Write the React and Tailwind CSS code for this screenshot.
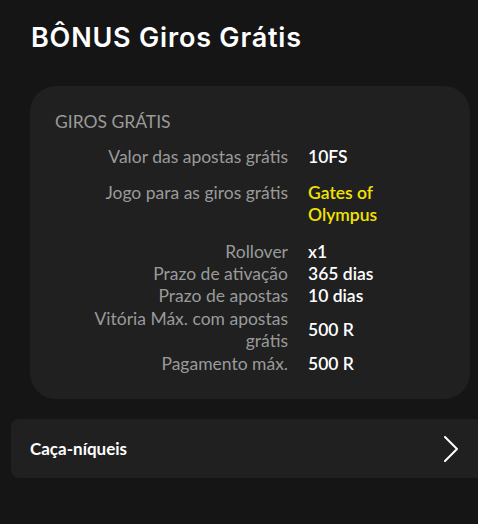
import React from 'react';

const rowsTop = [
    { label: 'Valor das apostas grátis', value: '10FS' },
    { label: 'Jogo para as giros grátis', value: 'Gates of Olympus', highlight: true },
];

const rowsBottom = [
    { label: 'Rollover', value: 'x1' },
    { label: 'Prazo de ativação', value: '365 dias' },
    { label: 'Prazo de apostas', value: '10 dias' },
    { label: 'Vitória Máx. com apostas grátis', value: '500 R' },
    { label: 'Pagamento máx.', value: '500 R' },
];

function InfoRow({ label, value, highlight, align = 'items-start' }) {
    return (
        <div className={`flex ${align} gap-[20px]`}>
            <div className="w-[233px] text-right text-[#9a9a9a]">{label}</div>
            <div className={`w-[120px] font-semibold ${highlight ? 'text-[#f2e300]' : 'text-white'}`}>
                {value}
            </div>
        </div>
    );
}

export default function App() {
    return (
        <div
            className="min-h-[524px] w-full overflow-hidden bg-[#151515]"
            style={{ fontFamily: 'Lato, "Noto Sans", sans-serif' }}
        >
            {/* Title */}
            <h1
                className="pl-[31px] pt-[22px] text-[27px] leading-[32px] font-semibold tracking-[0.8px] text-white"
                style={{ fontFamily: 'Inter, "Noto Sans", sans-serif' }}
            >
                BÔNUS Giros Grátis
            </h1>

            {/* Bonus card */}
            <div className="ml-[30px] mt-[32px] w-[440px] rounded-[26px] bg-[#202020] pl-[25px] pt-[25px] pb-[24px] text-[17.5px] leading-[22.4px]">
                <div className="uppercase text-[#9a9a9a]">Giros Grátis</div>

                <div className="mt-[13px] flex flex-col gap-[13px]">
                    {rowsTop.map((row) => (
                        <InfoRow key={row.label} {...row} />
                    ))}
                </div>

                <div className="mt-[14px] flex flex-col">
                    {rowsBottom.map((row) => (
                        <InfoRow key={row.label} {...row} align="items-center" />
                    ))}
                </div>
            </div>

            {/* Category link */}
            <div className="ml-[11px] mt-[20px] flex h-[59px] w-[480px] items-center rounded-[8px] bg-[#202020] pl-[19px] pr-[33px]">
                <span className="flex-1 text-[17px] font-bold text-white">Caça-níqueis</span>
                <svg width="14" height="26" viewBox="0 0 14 26" fill="none">
                    <polyline points="1,1 13,13 1,25" stroke="white" strokeWidth="2" strokeLinecap="round" strokeLinejoin="round" />
                </svg>
            </div>
        </div>
    );
}
